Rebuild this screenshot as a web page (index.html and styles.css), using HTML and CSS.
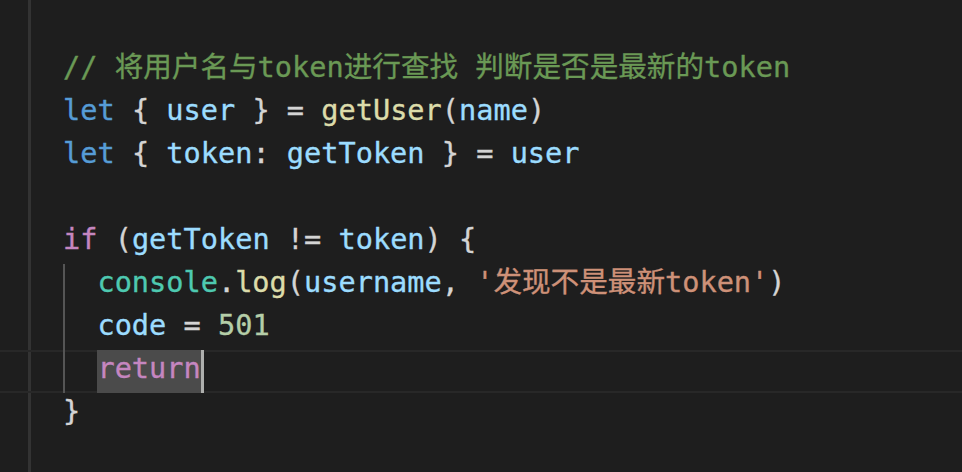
FILE: index.html
```html
<!DOCTYPE html>
<html lang="zh">
<head>
<meta charset="utf-8">
<title>editor</title>
<link rel="stylesheet" href="styles.css">
</head>
<body>
<div class="editor">
  <div class="line"><span class="cm">// 将用户名与token进行查找 判断是否是最新的token</span></div>
  <div class="line"><span class="kw">let</span> <span class="p">{</span> <span class="v">user</span> <span class="p">}</span> <span class="p">=</span> <span class="fn">getUser</span><span class="p">(</span><span class="v">name</span><span class="p">)</span></div>
  <div class="line"><span class="kw">let</span> <span class="p">{</span> <span class="v">token</span><span class="p">:</span> <span class="v">getToken</span> <span class="p">}</span> <span class="p">=</span> <span class="v">user</span></div>
  <div class="line"></div>
  <div class="line"><span class="ctl">if</span> <span class="p">(</span><span class="v">getToken</span> <span class="p">!=</span> <span class="v">token</span><span class="p">)</span> <span class="p">{</span></div>
  <div class="line"><span class="indent"></span><span class="cls">console</span><span class="p">.</span><span class="fn">log</span><span class="p">(</span><span class="v">username</span><span class="p">,</span> <span class="str">'发现不是最新token'</span><span class="p">)</span></div>
  <div class="line"><span class="indent"></span><span class="v">code</span> <span class="p">=</span> <span class="num">501</span></div>
  <div class="line current"><span class="indent"></span><span class="ctl sel">return</span><span class="cursor"></span></div>
  <div class="line"><span class="p">}</span></div>
</div>
</body>
</html>
```

FILE: styles.css
```css
html, body {
  margin: 0;
  padding: 0;
  background: #1e1e1e;
}

.editor {
  width: 962px;
  height: 472px;
  box-sizing: border-box;
  padding-top: 49px;
  background: linear-gradient(to right, transparent 28px, #333333 28px, #333333 31px, transparent 31px);
  font-family: "DejaVu Sans Mono", "Noto Sans CJK SC", monospace;
  font-size: 28.6px;
  color: #d4d4d4;
  -webkit-text-stroke: 0.35px currentColor;
}

.line {
  height: 43px;
  line-height: 37px;
  padding-left: 63px;
  white-space: pre;
}

.current {
  box-shadow: inset 0 2px #282828, inset 0 -2px #282828;
}

.indent {
  display: inline-block;
  width: 2ch;
  height: 43px;
  vertical-align: top;
  box-shadow: inset 2px 0 #555555;
}

.cm { color: #6a9955; }
.kw { color: #569cd6; }
.v { color: #9cdcfe; }
.fn { color: #dcdcaa; }
.p { color: #d4d4d4; }
.ctl { color: #c586c0; }
.cls { color: #4ec9b0; }
.str { color: #ce9178; }
.num { color: #b5cea8; }

.sel {
  display: inline-block;
  height: 43px;
  vertical-align: top;
  background: #4b4b4b;
}

.cursor {
  display: inline-block;
  width: 3px;
  height: 43px;
  vertical-align: top;
  background: #aeafad;
}
```
